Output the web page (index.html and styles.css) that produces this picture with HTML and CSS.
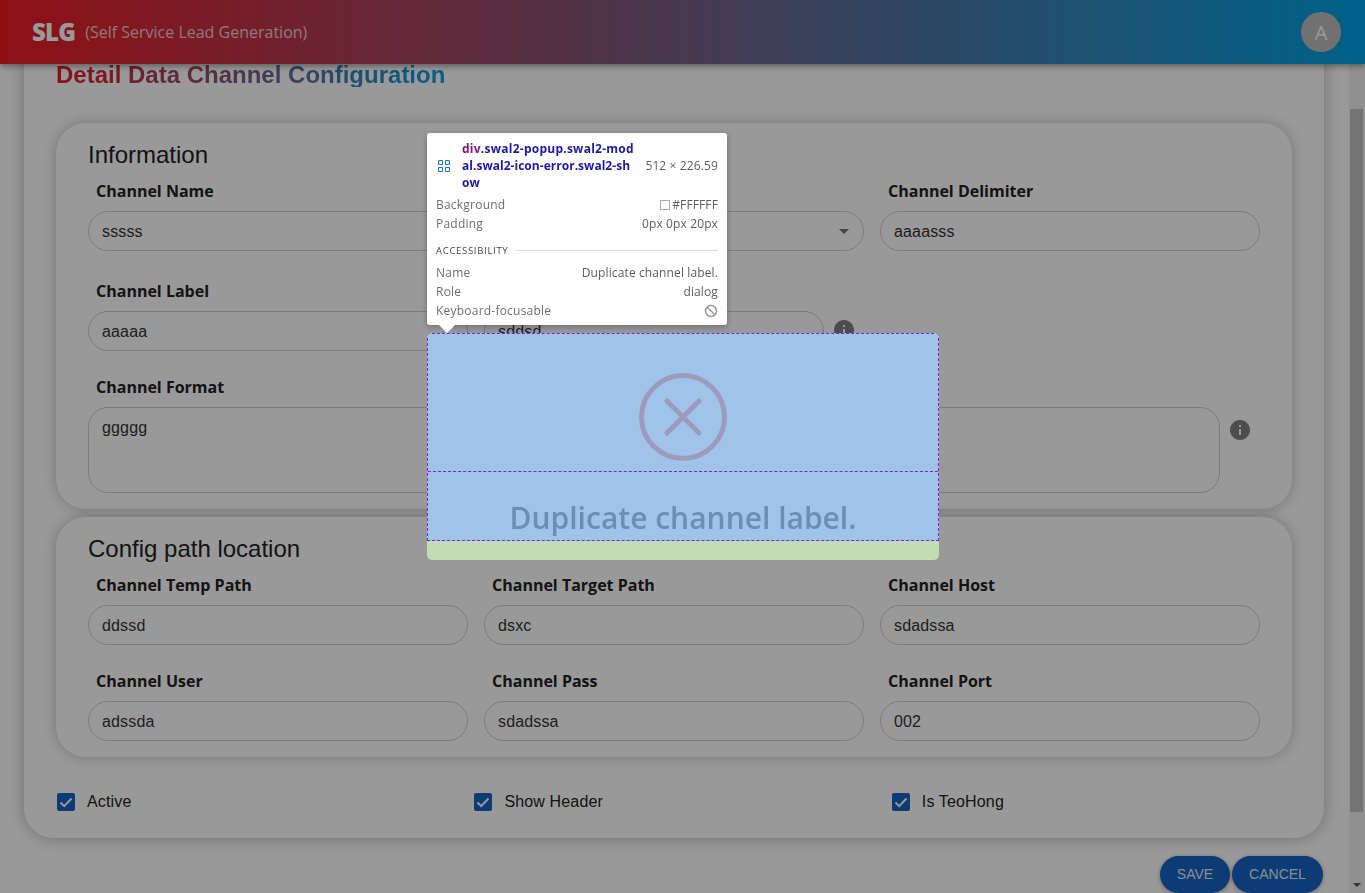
FILE: index.html
```html
<!DOCTYPE html>
<html lang="en">
<head>
  <meta charset="UTF-8">
  <meta name="viewport" content="width=device-width, initial-scale=1.0">
  <title>Detail Data Channel Configuration</title>
  <link rel="stylesheet" href="styles.css">
</head>
<body>
  <header class="topbar">
    <div class="brand">
      <span class="logo">SLG</span>
      <span class="tagline">(Self Service Lead Generation)</span>
    </div>
    <div class="avatar">A</div>
  </header>

  <div class="page">
    <main class="content">
      <div class="outer-card">
        <h1 class="page-title">Detail Data Channel Configuration</h1>

        <section class="panel">
          <h2>Information</h2>
          <div class="grid">
            <div class="field first-row">
              <label>Channel Name</label>
              <input type="text" value="sssss" readonly>
            </div>
            <div class="field first-row">
              <label>Channel Type</label>
              <div class="select"><span class="caret"></span></div>
            </div>
            <div class="field first-row">
              <label>Channel Delimiter</label>
              <input type="text" value="aaaasss" readonly>
            </div>

            <div class="field">
              <label>Channel Label</label>
              <input type="text" value="aaaaa" readonly>
            </div>
            <div class="field with-info">
              <label>Channel Prefix</label>
              <div class="info-row">
                <input type="text" value="sddsd" readonly>
                <svg class="info" viewBox="0 0 24 24"><path d="M12 2C6.48 2 2 6.48 2 12s4.48 10 10 10 10-4.48 10-10S17.52 2 12 2zm1 15h-2v-6h2v6zm0-8h-2V7h2v2z"/></svg>
              </div>
            </div>
            <div class="field"></div>

            <div class="field">
              <label>Channel Format</label>
              <textarea readonly>ggggg</textarea>
            </div>
            <div class="field with-info span-two">
              <label>Channel Query</label>
              <div class="info-row">
                <textarea readonly></textarea>
                <svg class="info info-low" viewBox="0 0 24 24"><path d="M12 2C6.48 2 2 6.48 2 12s4.48 10 10 10 10-4.48 10-10S17.52 2 12 2zm1 15h-2v-6h2v6zm0-8h-2V7h2v2z"/></svg>
              </div>
            </div>
          </div>
        </section>

        <section class="panel">
          <h2>Config path location</h2>
          <div class="grid">
            <div class="field">
              <label>Channel Temp Path</label>
              <input type="text" value="ddssd" readonly>
            </div>
            <div class="field">
              <label>Channel Target Path</label>
              <input type="text" value="dsxc" readonly>
            </div>
            <div class="field">
              <label>Channel Host</label>
              <input type="text" value="sdadssa" readonly>
            </div>
            <div class="field">
              <label>Channel User</label>
              <input type="text" value="adssda" readonly>
            </div>
            <div class="field">
              <label>Channel Pass</label>
              <input type="text" value="sdadssa" readonly>
            </div>
            <div class="field">
              <label>Channel Port</label>
              <input type="text" value="002" readonly>
            </div>
          </div>
        </section>

        <div class="checks">
          <div class="check">
            <span class="box"><svg viewBox="0 0 18 18"><path d="M3.5 9.5l3.7 3.6 7.3-7.6" /></svg></span>
            Active
          </div>
          <div class="check">
            <span class="box"><svg viewBox="0 0 18 18"><path d="M3.5 9.5l3.7 3.6 7.3-7.6" /></svg></span>
            Show Header
          </div>
          <div class="check">
            <span class="box"><svg viewBox="0 0 18 18"><path d="M3.5 9.5l3.7 3.6 7.3-7.6" /></svg></span>
            Is TeoHong
          </div>
        </div>
      </div>

      <div class="actions">
        <button class="btn btn-save">SAVE</button>
        <button class="btn btn-cancel">CANCEL</button>
      </div>
    </main>

    <div class="scrollbar">
      <div class="thumb"></div>
      <span class="arrow-down"></span>
    </div>
  </div>

  <div class="overlay">
    <div class="popup">
      <div class="popup-box">
        <div class="popup-icon">
          <svg width="88" height="88" viewBox="0 0 88 88">
            <circle cx="44" cy="44" r="41.5"/>
            <path d="M28 28l32 32M60 28L28 60"/>
          </svg>
        </div>
        <div class="popup-title">Duplicate channel label.</div>
      </div>
      <div class="popup-padding"></div>
    </div>

    <div class="inspect">
      <div class="inspect-head">
        <svg class="inspect-icon" viewBox="0 0 14 14"><path d="M1.5 1.5h4v4h-4zM8.5 1.5h4v4h-4zM1.5 8.5h4v4h-4zM8.5 8.5h4v4h-4z"/></svg>
        <div class="inspect-name"><span class="name-first"><span class="tag">div</span>.swal2-popup.swal2-mod</span><br>al.swal2-icon-error.swal2-sh<br>ow</div>
        <div class="inspect-size">512 × 226.59</div>
      </div>
      <div class="inspect-row"><span>Background</span><span class="val"><i class="swatch"></i>#FFFFFF</span></div>
      <div class="inspect-row"><span>Padding</span><span class="val">0px 0px 20px</span></div>
      <div class="inspect-section">ACCESSIBILITY</div>
      <div class="inspect-row"><span>Name</span><span class="val">Duplicate channel label.</span></div>
      <div class="inspect-row"><span>Role</span><span class="val">dialog</span></div>
      <div class="inspect-row"><span>Keyboard-focusable</span>
        <svg class="ban" viewBox="0 0 14 14"><circle cx="7" cy="7" r="5.5"/><path d="M3.2 3.2l7.6 7.6"/></svg>
      </div>
      <span class="inspect-arrow"></span>
    </div>
  </div>
</body>
</html>
```

FILE: styles.css
```css
* { box-sizing: border-box; }

body {
  margin: 0;
  height: 893px;
  overflow: hidden;
  background-color: #fff;
  font-family: "Liberation Sans", Arial, sans-serif;
  color: #222;
}

.topbar {
  position: relative;
  z-index: 2;
  height: 64px;
  padding: 0 24px 0 32px;
  display: flex;
  align-items: center;
  justify-content: space-between;
  background: linear-gradient(90deg, #ed1b24, #00a3e6);
  box-shadow: 0 2px 4px -1px rgba(0,0,0,.2), 0 4px 5px rgba(0,0,0,.14), 0 1px 10px rgba(0,0,0,.12);
}
.brand { display: flex; align-items: center; gap: 10px; }
.logo {
  font-family: "Open Sans", sans-serif;
  font-weight: 800;
  font-size: 24px;
  letter-spacing: -.8px;
  line-height: 1;
  color: #fff;
}
.tagline {
  font-family: "Open Sans", sans-serif;
  font-size: 16px;
  color: rgba(255,255,255,.75);
}
.avatar {
  width: 40px;
  height: 40px;
  border-radius: 50%;
  background-color: #bdbdbd;
  color: #fff;
  font-family: "Open Sans", sans-serif;
  font-size: 20px;
  display: flex;
  align-items: center;
  justify-content: center;
}

.page { display: flex; height: 829px; }
.content { width: 1349px; padding-left: 24px; }

.outer-card {
  width: 1300px;
  height: 804px;
  margin-top: -30px;
  padding: 28px 32px 0;
  background-color: #fff;
  border-radius: 30px;
  box-shadow: 0 0 16px rgba(0,0,0,.28);
}
.page-title {
  margin: 0 0 36px;
  width: fit-content;
  height: 25px;
  font-size: 24px;
  line-height: 25px;
  font-weight: bold;
  background: linear-gradient(90deg, #ed1b24, #00a3e6);
  -webkit-background-clip: text;
  background-clip: text;
  color: transparent;
}

.panel {
  padding: 16px 32px;
  margin-bottom: 8px;
  border-radius: 30px;
  background-color: #fff;
  box-shadow: 0 0 14px rgba(0,0,0,.24);
}
.panel h2 {
  margin: 0 0 10px;
  font-size: 24px;
  line-height: 32px;
  font-weight: normal;
}

.grid {
  display: grid;
  grid-template-columns: repeat(3, 380px);
  column-gap: 16px;
  row-gap: 26px;
}
.field { display: flex; flex-direction: column; }
.field label {
  margin: 0 8px 10px;
  font-family: "Open Sans", sans-serif;
  font-size: 16px;
  line-height: 20px;
  font-weight: 700;
}
.first-row { padding-bottom: 4px; }
.span-two { grid-column: span 2; }

input, textarea, .select {
  width: 100%;
  border: 1px solid #d0d0d0;
  background: transparent;
  font-family: "Liberation Sans", Arial, sans-serif;
  font-size: 16px;
  letter-spacing: .15px;
  color: #333;
  outline: none;
}
input, .select {
  height: 40px;
  padding: 2px 13px 0;
  border-radius: 20px;
}
textarea {
  display: block;
  height: 86px;
  padding: 11px 13px 10px;
  border-radius: 20px;
  resize: none;
}
.select {
  padding: 0 14px;
  display: flex;
  align-items: center;
  justify-content: flex-end;
}
.caret {
  width: 0;
  height: 0;
  border-left: 5px solid transparent;
  border-right: 5px solid transparent;
  border-top: 5px solid #757575;
}

.info-row { display: flex; align-items: flex-start; padding-right: 8px; }
.info { flex: none; width: 24px; height: 24px; margin: 7px 0 0 8px; fill: #808080; }
.info-low { margin-top: 11px; }

.checks {
  display: grid;
  grid-template-columns: repeat(3, 417.4px);
  margin: 33px 0 0 1px;
}
.check {
  display: flex;
  align-items: center;
  gap: 12px;
  height: 24px;
  font-size: 16px;
  letter-spacing: .15px;
}
.box {
  width: 18px;
  height: 18px;
  border-radius: 2px;
  background-color: #1565c0;
}
.box svg { display: block; fill: none; stroke: #fff; stroke-width: 2; }

.actions {
  display: flex;
  justify-content: flex-end;
  gap: 2px;
  width: 1299px;
  margin-top: 18px;
}
.btn {
  height: 37px;
  padding: 0 0 2px;
  border: 0;
  border-radius: 19px;
  background-color: #1565c0;
  color: rgba(255,255,255,.9);
  font-family: "Liberation Sans", Arial, sans-serif;
  font-size: 14px;
  box-shadow: 0 1px 4px rgba(0,0,0,.35);
}
.btn-save { width: 70px; }
.btn-cancel { width: 91px; }

.scrollbar {
  width: 16px;
  height: 829px;
  padding-left: 1px;
  background-color: #f1f1f1;
  display: flex;
  flex-direction: column;
}
.thumb {
  width: 13px;
  height: 703px;
  margin-top: 45px;
  background-color: #c1c1c1;
}
.arrow-down {
  margin: auto 0 6px 3px;
  width: 0;
  height: 0;
  border-left: 4px solid transparent;
  border-right: 4px solid transparent;
  border-top: 4px solid #505050;
}

.overlay {
  position: fixed;
  inset: 0;
  z-index: 5;
  background-color: rgba(0,0,0,.4);
  display: flex;
  align-items: center;
  justify-content: center;
}

.popup {
  width: 512px;
  height: 226.6px;
  display: flex;
  flex-direction: column;
  border-radius: 5px;
  overflow: hidden;
  margin-left: 1px;
}
.popup-box {
  height: 207.6px;
  background-color: #a0c4e8;
  border: 1px dashed #7a22dd;
}
.popup-icon {
  height: 138px;
  padding-top: 39px;
  display: flex;
  justify-content: center;
  border-bottom: 1px dashed #7a22dd;
}
.popup-icon svg { fill: none; stroke: #9e9abe; stroke-width: 5; stroke-linecap: round; }
.popup-title {
  padding-top: 23px;
  text-align: center;
  font-family: "Open Sans", sans-serif;
  font-size: 30px;
  line-height: 45px;
  font-weight: 600;
  color: #6c8eb5;
}
.popup-padding { height: 19px; background-color: #c4dcb3; }

.inspect {
  position: absolute;
  left: 427px;
  top: 133px;
  width: 300px;
  height: 192px;
  padding: 7px 9px 0;
  background-color: #fff;
  border-radius: 3px;
  box-shadow: 0 2px 6px rgba(0,0,0,.3);
  font-family: "Open Sans", sans-serif;
  font-size: 12px;
  letter-spacing: .22px;
  color: #6e6e6e;
}
.inspect-head {
  display: flex;
  align-items: center;
  margin-bottom: 4px;
}
.inspect-icon {
  flex: none;
  width: 14px;
  height: 14px;
  margin: 0 11px 0 1px;
  fill: none;
  stroke: #1a73e8;
}
.inspect-name {
  width: 184px;
  white-space: nowrap;
  font-weight: 700;
  line-height: 17px;
  letter-spacing: .03px;
  color: #1a1aa6;
}
.name-first { letter-spacing: .25px; }
.tag { color: #881280; }
.inspect-size { color: #5c5c5c; white-space: nowrap; letter-spacing: .12px; }
.inspect-row {
  display: flex;
  align-items: center;
  justify-content: space-between;
  height: 19px;
  line-height: 19px;
}
.val { display: flex; align-items: center; color: #5c5c5c; letter-spacing: .12px; }
.swatch {
  width: 10px;
  height: 10px;
  margin-right: 2px;
  border: 1px solid #aaa;
}
.inspect-section {
  display: flex;
  align-items: center;
  gap: 7px;
  margin: 8px 0 4px;
  height: 18px;
  font-size: 9.5px;
  letter-spacing: .7px;
  color: #444;
}
.inspect-section::after {
  content: "";
  flex: 1;
  height: 1px;
  background-color: #ddd;
}
.ban { width: 14px; height: 14px; fill: none; stroke: #9a9a9a; stroke-width: 1.5; }
.inspect-arrow {
  position: absolute;
  left: 12px;
  bottom: -8px;
  width: 0;
  height: 0;
  border-left: 8px solid transparent;
  border-right: 8px solid transparent;
  border-top: 8px solid #fff;
}
```
